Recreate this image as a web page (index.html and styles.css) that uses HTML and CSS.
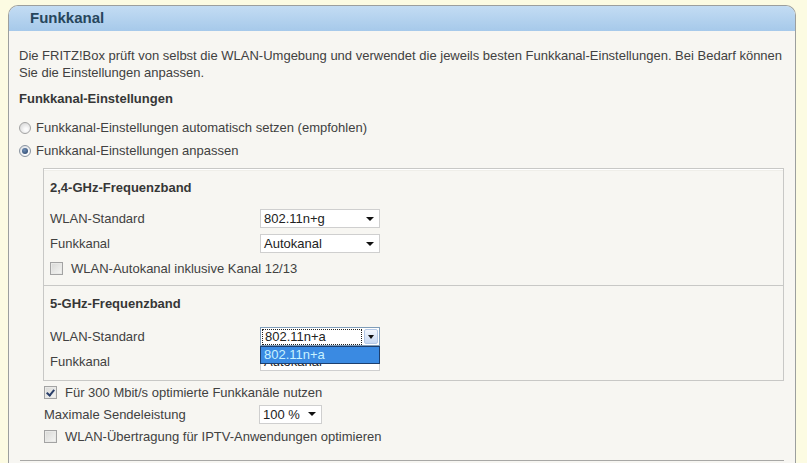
FILE: index.html
```html
<!DOCTYPE html>
<html lang="de">
<head>
<meta charset="utf-8">
<title>Funkkanal</title>
<link rel="stylesheet" href="styles.css">
</head>
<body>
<div class="page">
  <div class="panel">
    <div class="panel-head">Funkkanal</div>
    <div class="panel-body">
      <p class="intro">Die FRITZ!Box prüft von selbst die WLAN-Umgebung und verwendet die jeweils besten Funkkanal-Einstellungen. Bei Bedarf können<br>Sie die Einstellungen anpassen.</p>
      <h3 class="sub">Funkkanal-Einstellungen</h3>
      <div class="radio-row"><span class="radio"></span><span>Funkkanal-Einstellungen automatisch setzen (empfohlen)</span></div>
      <div class="radio-row"><span class="radio checked"></span><span>Funkkanal-Einstellungen anpassen</span></div>

      <div class="bands">
        <div class="band band-first">
          <h4 class="band-title">2,4-GHz-Frequenzband</h4>
          <div class="field">
            <span class="label">WLAN-Standard</span>
            <div class="select w120"><span class="val">802.11n+g</span><span class="arrow"></span></div>
          </div>
          <div class="field">
            <span class="label">Funkkanal</span>
            <div class="select w120"><span class="val">Autokanal</span><span class="arrow"></span></div>
          </div>
          <div class="field">
            <span class="check"></span><span>WLAN-Autokanal inklusive Kanal 12/13</span>
          </div>
        </div>
        <div class="band band-second">
          <h4 class="band-title">5-GHz-Frequenzband</h4>
          <div class="field field-top">
            <span class="label">WLAN-Standard</span>
            <div class="select w120 focused">
              <span class="val"><span class="focus-box">802.11n+a</span></span>
              <span class="btn"><span class="arrow"></span></span>
              <div class="dropdown"><span class="opt">802.11n+a</span></div>
            </div>
          </div>
          <div class="field">
            <span class="label">Funkkanal</span>
            <div class="select w120"><span class="val">Autokanal</span><span class="arrow"></span></div>
          </div>
        </div>
      </div>

      <div class="options">
        <div class="opt-row"><span class="check checked"></span><span>Für 300 Mbit/s optimierte Funkkanäle nutzen</span></div>
        <div class="opt-row">
          <span class="label label-wide">Maximale Sendeleistung</span>
          <div class="select w63"><span class="val">100 %</span><span class="arrow"></span></div>
        </div>
        <div class="opt-row opt-last"><span class="check"></span><span>WLAN-Übertragung für IPTV-Anwendungen optimieren</span></div>
      </div>
      <div class="rule"></div>
    </div>
  </div>
</div>
</body>
</html>
```

FILE: styles.css
```css
html, body {
  margin: 0;
  padding: 0;
  background: #fcfbe2;
  height: 100%;
  overflow: hidden;
}
body {
  font-family: "Liberation Sans", Arial, sans-serif;
  font-size: 13px;
  line-height: 17px;
  color: #414141;
}
.page {
  padding: 5px 11px 0 8px;
}
.panel {
  border: 1px solid #9c9f9e;
  border-bottom: none;
  border-radius: 10px 10px 0 0;
  overflow: hidden;
  background: #f7f6f2;
  height: 480px;
}
.panel-head {
  height: 25px;
  line-height: 24px;
  padding-left: 21px;
  font-weight: bold;
  font-size: 15px;
  color: #27465c;
  background: linear-gradient(#c3dcf3, #a6c9ea);
}
.panel-body {
  padding: 16px 11px 0 10px;
}
.intro {
  margin: 0;
  white-space: nowrap;
}
.sub {
  margin: 9px 0 9px;
  font-size: 13px;
  line-height: 17px;
  font-weight: bold;
  color: #363636;
}
.radio-row {
  height: 23px;
  display: flex;
  align-items: center;
  gap: 5px;
}
.radio {
  width: 10px;
  height: 10px;
  border-radius: 50%;
  border: 1px solid #a3a3a3;
  background: radial-gradient(circle at 60% 65%, #fbfbfb 15%, #cfcfcf 100%);
  position: relative;
}
.radio.checked {
  border-color: #8a94a0;
  background: radial-gradient(circle at 60% 65%, #ffffff 20%, #d2d6dc 100%);
}
.radio.checked::after {
  content: "";
  position: absolute;
  left: 2px;
  top: 2px;
  width: 6px;
  height: 6px;
  border-radius: 50%;
  background: radial-gradient(circle at 40% 35%, #6f8eb5, #243e63);
}
.bands {
  margin: 6px 0 0 24px;
  border: 1px solid #c8c8c6;
  box-shadow: inset 0 1px 0 #fff, inset 0 2px 0 #efeee9;
}
.band {
  padding: 10px 6px 4px;
}
.band-second {
  border-top: 1px solid #c8c8c6;
  padding: 9px 6px 6px;
}
.band-title {
  margin: 0 0 10px;
  font-size: 13px;
  line-height: 17px;
  font-weight: bold;
  color: #363636;
}
.band-second .band-title {
  margin-bottom: 12px;
}
.field {
  height: 25px;
  display: flex;
  align-items: center;
}
.label {
  width: 210px;
  flex: none;
}
.label-wide {
  width: 215px;
}
.select {
  height: 17px;
  border: 1px solid #cfcfcf;
  background: #fff;
  display: flex;
  align-items: center;
  position: relative;
  box-sizing: content-box;
  color: #222;
}
.w120 { width: 118px; }
.w63 { width: 61px; }
.select .val {
  flex: 1;
  padding-left: 3px;
  line-height: 15px;
}
.arrow {
  width: 0;
  height: 0;
  border-left: 4px solid transparent;
  border-right: 4px solid transparent;
  border-top: 4px solid #111;
  margin-right: 5px;
}
.focused {
  border-color: #7f9db9;
}
.focused .val {
  padding: 0 1px;
}
.focus-box {
  display: block;
  border: 1px dotted #222;
  padding-left: 2px;
  line-height: 14px;
  height: 14px;
}
.btn {
  width: 14px;
  height: 15px;
  margin: 0 1px;
  border: 1px solid #b4c8e6;
  border-radius: 2px;
  background: linear-gradient(#f3f7fd, #c6d8f3);
  display: flex;
  align-items: center;
  justify-content: center;
  box-sizing: border-box;
}
.btn .arrow {
  margin: 0;
  border-left-width: 3.5px;
  border-right-width: 3.5px;
}
.dropdown {
  position: absolute;
  left: -1px;
  top: 18px;
  width: 118px;
  height: 16px;
  border: 1px solid #1d3f6e;
  background: #3a8ae2;
  z-index: 2;
}
.opt {
  display: block;
  padding-left: 3px;
  line-height: 16px;
  color: #c8f2ff;
}
.check {
  width: 11px;
  height: 11px;
  border: 1px solid #a3a3a3;
  background: linear-gradient(135deg, #d8d8d6, #f6f6f4);
  box-shadow: inset 0 0 0 1px #e9e9e7;
  margin-right: 8px;
  flex: none;
  position: relative;
}
.check.checked::after {
  content: "";
  position: absolute;
  left: 3px;
  top: 1px;
  width: 3px;
  height: 6px;
  border: solid #2a3f6a;
  border-width: 0 2px 2px 0;
  transform: rotate(40deg);
}
.options {
  padding-left: 25px;
}
.opt-row {
  height: 22px;
  display: flex;
  align-items: center;
}
.opt-last {
  height: 23px;
}
.rule {
  margin: 12px 0 0 1px;
  border-top: 1px solid #a8a8a6;
}
```
